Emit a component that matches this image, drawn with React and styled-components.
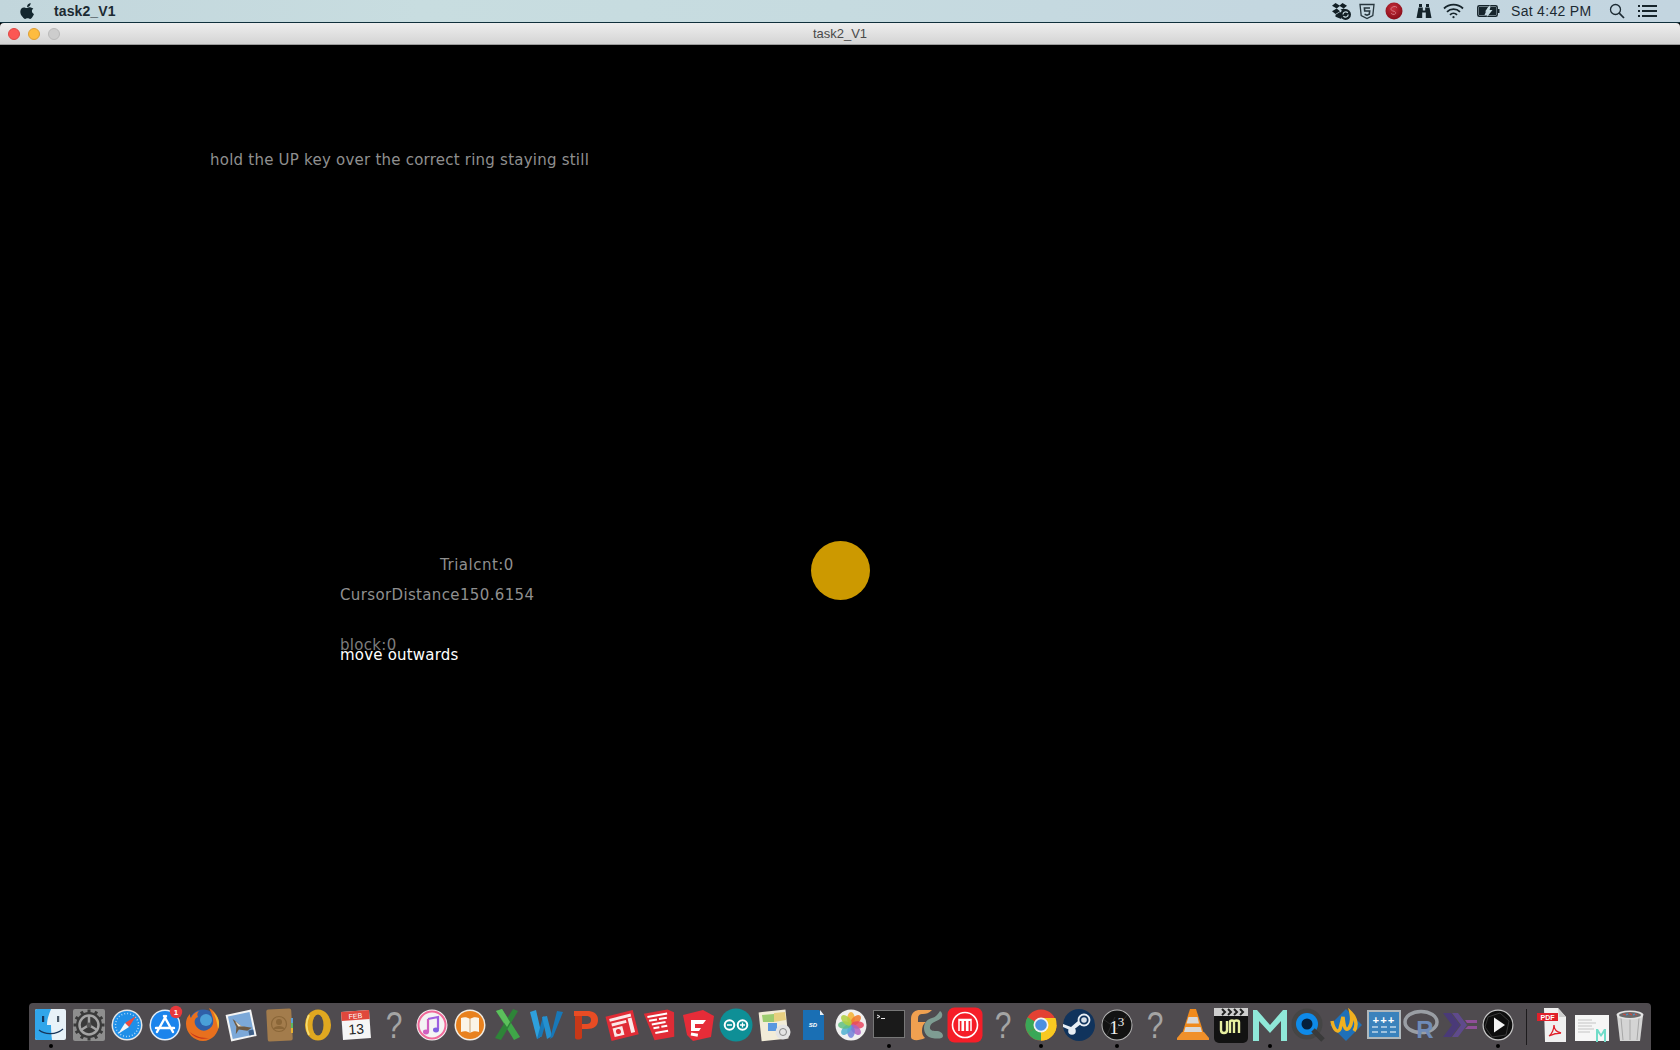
import React from "react";
import styled, { createGlobalStyle } from "styled-components";

const GlobalStyle = createGlobalStyle`
  html, body {
    margin: 0;
    padding: 0;
    background: #000;
  }
  #root {
    width: 1680px;
    height: 1050px;
    overflow: hidden;
  }
`;

const Screen = styled.div`
  width: 1680px;
  height: 1050px;
  display: flex;
  flex-direction: column;
  overflow: hidden;
  background: #000;
`;

const MenuBar = styled.div`
  height: 22px;
  flex: none;
  display: flex;
  align-items: center;
  justify-content: space-between;
  padding: 0 23px 0 20px;
  background: linear-gradient(90deg, #c2d6dc 0%, #c8dde0 25%, #c6dbe0 50%, #c4d7e0 75%, #c3d5e0 100%);
  border-bottom: 1px solid #10303c;
  font-family: "Liberation Sans", Arial, sans-serif;
  color: #1c2a32;
`;

const MenuLeft = styled.div`
  display: flex;
  align-items: center;
`;

const MenuRight = styled.div`
  display: flex;
  align-items: center;
`;

const AppName = styled.div`
  font-size: 14px;
  font-weight: bold;
  letter-spacing: 0.1px;
  margin-left: 19px;
`;

const StatusItem = styled.div`
  display: flex;
  align-items: center;
  margin-left: ${(p) => p.$ml}px;
`;

const Clock = styled.div`
  font-size: 14px;
  letter-spacing: 0.3px;
  margin-left: 11px;
  width: 80px;
  white-space: nowrap;
`;

const TitleBar = styled.div`
  height: 21px;
  flex: none;
  position: relative;
  display: flex;
  align-items: center;
  justify-content: center;
  background: linear-gradient(#eeeeee, #d4d4d4);
  border-bottom: 1px solid #9c9c9c;
  border-radius: 4px 4px 0 0;
`;

const Lights = styled.div`
  position: absolute;
  left: 8px;
  top: 5px;
  display: flex;
  gap: 8px;
`;

const Light = styled.div`
  width: 12px;
  height: 12px;
  box-sizing: border-box;
  border-radius: 50%;
  background: ${(p) => p.$color};
  border: 1px solid ${(p) => p.$edge};
`;

const WindowTitle = styled.div`
  font-family: "Liberation Sans", Arial, sans-serif;
  font-size: 13px;
  color: #4a4a4a;
`;

const Stage = styled.div`
  flex: 1;
  position: relative;
  display: flex;
  flex-direction: column;
  justify-content: flex-end;
  background: #000;
`;

const Label = styled.div`
  position: absolute;
  left: ${(p) => p.$x}px;
  top: ${(p) => p.$y}px;
  font-family: "DejaVu Sans", sans-serif;
  font-size: 15px;
  letter-spacing: ${(p) => p.$track}px;
  line-height: 20px;
  white-space: nowrap;
  color: ${(p) => p.$color || "#8f8f8f"};
`;

const Cursor = styled.div`
  position: absolute;
  left: 811px;
  top: 496px;
  width: 59px;
  height: 59px;
  border-radius: 50%;
  background: #cc9900;
`;

const Dock = styled.div`
  height: 47px;
  margin: 0 29px;
  padding-left: 3px;
  display: flex;
  background: #4f4b4f;
  border-radius: 4px 4px 0 0;
`;

const Slot = styled.div`
  position: relative;
  width: 38.08px;
  flex: none;
  display: flex;
  justify-content: center;
  padding-top: 4px;
  box-sizing: border-box;
  &::after {
    content: "";
    display: ${(p) => (p.$running ? "block" : "none")};
    position: absolute;
    left: 50%;
    bottom: 2px;
    width: 4px;
    height: 4px;
    margin-left: -2px;
    border-radius: 50%;
    background: #000;
  }
`;

const Divider = styled.div`
  width: 1px;
  height: 36px;
  flex: none;
  margin: 6px 8px 0 9px;
  background: #1d1b1d;
`;

const Glyph = styled.svg`
  width: 36px;
  height: 36px;
  display: block;
  flex: none;
  overflow: visible;
`;

const AppleLogo = () => (
  <svg width="15" height="16" viewBox="0 0 15 16">
    <path fill="#13262e" d="M10.6 0c.1 1.2-.4 2.2-1 2.9-.7.8-1.6 1.2-2.5 1.1C7 2.9 7.5 1.9 8.1 1.3 8.8.6 9.8.1 10.6 0zM13.4 5.4c-.9.6-1.5 1.5-1.5 2.7 0 1.4.8 2.4 2.1 3-.4 1.1-.9 2.1-1.6 3-.6.9-1.3 1.8-2.3 1.8-1 0-1.3-.6-2.5-.6-1.2 0-1.5.6-2.500.6-1 0-1.7-1-2.4-1.9C1 12.4.3 10.500.3 8.7c0-2.8 1.8-4.3 3.6-4.3 1 0 1.900.7 2.500.7.6 0 1.600-.8 2.800-.8 1.100 0 2.200.5 4.200 1.100z" />
  </svg>
);

// five dropbox diamonds with the sync badge on top
const Dropbox = () => (
  <svg width="20" height="17" viewBox="0 0 20 17" fill="#131f25">
    <path d="M4.5 0l4.5 2.8-3.300 2.700L1 2.800zM11.500 0L16 2.800 12.700 5.500 8.300 2.800z" />
    <path d="M1 8.200l4.700-2.700 3.300 2.700-4.500 2.800zM4.500 11.800l4.500-2.700 2 1.500-.8 5.400-5.700-2.300z" />
    <path d="M9.500 6.500l3.200-1 3 1.500-3.500 2z" />
    <circle cx="14.600" cy="11.500" r="5.400" />
    <path d="M12 11.500a2.700 2.700 0 0 1 4.800-1.600M17.200 11.500a2.700 2.700 0 0 1-4.800 1.600" stroke="#c6dbe0" strokeWidth="1.200" fill="none" />
  </svg>
);

const ShieldFive = () => (
  <svg width="16" height="17" viewBox="0 0 16 17" fill="none" stroke="#27363d" strokeWidth="1.300">
    <path d="M1 1.500h14l-1.200 11L8 15.500l-5.800-3z" />
    <path d="M11 5H5.400l.3 3h5l-.4 3.300L8 12.200l-2.400-.9" strokeWidth="1.600" />
  </svg>
);

const RedBadge = () => (
  <svg width="18" height="18" viewBox="0 0 18 18">
    <defs>
      <radialGradient id="redBall" cx="45%" cy="35%" r="70%">
        <stop offset="0%" stopColor="#c8303c" />
        <stop offset="100%" stopColor="#820a16" />
      </radialGradient>
    </defs>
    <circle cx="9" cy="9" r="8.500" fill="url(#redBall)" />
    <path d="M12 5.500a3.800 3.800 0 0 0-5.800.8c-.8 1.600.7 2.500 2.800 3 2.200.5 2.200 2.800.2 3.100a3.500 3.500 0 0 1-3-1" fill="none" stroke="#d87a84" strokeWidth="1" />
  </svg>
);

const Binoculars = () => (
  <svg width="16" height="16" viewBox="0 0 16 16" fill="#14232a">
    <path d="M3 1h3v3H3zM10 1h3v3h-3z" />
    <path d="M2.500 4.500h4.300v3h2.400v-3h4.300L15.500 15h-5.700V9.500H6.200V15H.5z" />
  </svg>
);

const Wifi = () => (
  <svg width="21" height="16" viewBox="0 0 21 16" fill="none" stroke="#16242b" strokeWidth="1.800">
    <path d="M1 5.500a13.500 13.500 0 0 1 19 0" />
    <path d="M4 8.800a9.300 9.300 0 0 1 13 0" />
    <path d="M7 11.800a5 5 0 0 1 7 0" />
    <circle cx="10.500" cy="14.200" r="1.100" fill="#16242b" stroke="none" />
  </svg>
);

const Battery = () => (
  <svg width="23" height="14" viewBox="0 0 23 14">
    <rect x="0.800" y="1.800" width="19.400" height="10.400" rx="1.500" fill="none" stroke="#16242b" strokeWidth="1.500" />
    <rect x="21" y="5" width="1.500" height="4" fill="#16242b" />
    <path d="M2 3h9l-3.500 8H2z" fill="#16242b" />
    <path d="M13.500 3h5.500v8h-8z" fill="#16242b" />
    <path d="M13.500 .5L8 7.500h3.500L9.500 13.500l6-7.500H12z" fill="#c6dbe0" />
  </svg>
);

const SearchGlass = () => (
  <svg width="16" height="16" viewBox="0 0 16 16" fill="none" stroke="#1c2a32" strokeWidth="1.300">
    <circle cx="6.500" cy="6.500" r="5" />
    <path d="M10.200 10.200L15 15" strokeWidth="1.700" />
  </svg>
);

const ListLines = () => (
  <svg width="19" height="12" viewBox="0 0 19 12" fill="#16242b">
    <path d="M0 0h2v2H0zM0 5h2v2H0zM0 10h2v2H0zM4 0h15v2H4zM4 5h15v2H4zM4 10h15v2H4z" />
  </svg>
);

const gearTeeth = [0, 30, 60, 90, 120, 150, 180, 210, 240, 270, 300, 330];

const petals = [
  ["#f4b030", 0],
  ["#f07828", 45],
  ["#e84860", 90],
  ["#b060c0", 135],
  ["#7080d8", 180],
  ["#50b0d0", 225],
  ["#60c080", 270],
  ["#b0d040", 315],
];

const icons = {
  finder: (
    <>
      <rect x="2" y="2" width="31" height="31" rx="2" fill="#e8f2f8" />
      <path d="M2 4a2 2 0 0 1 2-2h14c-2 5-4 10-4 16h4c0 5 .5 11 1 15H4a2 2 0 0 1-2-2z" fill="#31a6ea" />
      <rect x="9" y="9" width="2.200" height="6" fill="#16355a" />
      <rect x="24" y="9" width="2.200" height="6" fill="#4a5a68" />
      <path d="M6 23c6 5 17 5 24-1" stroke="#16355a" strokeWidth="1.200" fill="none" />
    </>
  ),
  prefs: (
    <>
      <rect x="2" y="2" width="32" height="32" rx="2" fill="#8e8e8e" />
      <circle cx="18" cy="18" r="13" fill="#3a3a3a" />
      {gearTeeth.map((a) => (
        <rect key={a} x="16.500" y="2.500" width="3" height="3.500" fill="#3a3a3a" transform={`rotate(${a} 18 18)`} />
      ))}
      <circle cx="18" cy="18" r="9.500" fill="none" stroke="#a4a4a4" strokeWidth="2.500" />
      <path d="M18 18V9M18 18l-8 5M18 18l8 5" stroke="#a4a4a4" strokeWidth="2.500" />
      <circle cx="18" cy="18" r="2.500" fill="#555" />
    </>
  ),
  safari: (
    <>
      <circle cx="18" cy="18" r="15.500" fill="#e6e6e6" />
      <circle cx="18" cy="18" r="14" fill="#1f8fe8" />
      <circle cx="18" cy="18" r="11.500" fill="none" stroke="#a9d4f6" strokeWidth="1.500" strokeDasharray="1 2" />
      <path d="M27 9L16 16l4 4z" fill="#f04a3c" />
      <path d="M9 27l11-7-4-4z" fill="#f4f4f4" />
    </>
  ),
  appstore: (
    <>
      <circle cx="18" cy="18" r="15.500" fill="#e4eef8" />
      <circle cx="18" cy="18" r="14" fill="#1b84ec" />
      <path d="M19 9l-9 16M17 9l9 16M9 21h18" stroke="#fff" strokeWidth="2.400" strokeLinecap="round" />
      <circle cx="29" cy="5" r="6.200" fill="#e8383c" />
      <text x="29" y="8" textAnchor="middle" fontSize="8" fontWeight="bold" fill="#fff" fontFamily="Liberation Sans">1</text>
    </>
  ),
  firefox: (
    <>
      <circle cx="18" cy="17" r="14.500" fill="#2f5fa8" />
      <circle cx="21" cy="13" r="6" fill="#4aa0d8" />
      <path d="M24 1c6 3 10 9 10 16 0 9-7 17-16 17S1 26 1 17c0-4 1-7 4-10 0 2 0 3 1 4 1-3 4-6 8-7-2 2-2 4-1 6-3 1-4 4-3 7 2 5 7 8 12 6 5-2 7-6 6-11-.5-3-2-7-4-11z" fill="#e8701e" />
      <path d="M27 4c4 3 7 8 7 12 0 2 0 4-1 6-1-6-2-13-6-18z" fill="#f4b832" />
      <path d="M5 25c4 6 12 8 19 6-7 0-13-1-19-6z" fill="#c8341a" />
    </>
  ),
  mail: (
    <g transform="rotate(-12 18 18)">
      <rect x="5" y="5" width="26" height="27" fill="#f4f4f4" />
      <rect x="7" y="7" width="22" height="23" fill="#7ca8d8" />
      <path d="M11 10l7 9 10 4-5 2-8-3-4 4 2-7z" fill="#6e5a44" />
      <path d="M13 13l5 6 3 1-6-1z" fill="#e8e0d0" />
      <rect x="24" y="25" width="5" height="5" fill="#3f5f88" />
    </g>
  ),
  contacts: (
    <>
      <rect x="5" y="2" width="25" height="32" rx="2" fill="#a37c4c" transform="rotate(-3 18 18)" />
      <rect x="29" y="11" width="2" height="5" fill="#5aa0d8" />
      <rect x="29" y="16" width="2" height="5" fill="#5cb860" />
      <rect x="29" y="21" width="2" height="5" fill="#e8b030" />
      <circle cx="17" cy="17" r="7.500" fill="none" stroke="#8a6638" strokeWidth="1.200" />
      <circle cx="17" cy="15" r="3" fill="#8a6638" />
      <path d="M11 22c2-4 10-4 12 0z" fill="#8a6638" />
    </>
  ),
  outlook: (
    <>
      <ellipse cx="18" cy="18" rx="13" ry="15.500" fill="#e0a820" />
      <ellipse cx="18" cy="18" rx="5.500" ry="10.500" fill="#4f4b4f" />
      <path d="M9 8c-3 6-3 14 0 20" stroke="#f8dc70" strokeWidth="2" fill="none" />
    </>
  ),
  calendar: (
    <g transform="rotate(-4 18 18)">
      <rect x="4" y="4" width="28" height="28" fill="#f6f6f6" />
      <rect x="4" y="4" width="28" height="9" fill="#e0483c" />
      <text x="18" y="11.500" textAnchor="middle" fontSize="7" fill="#fff" fontFamily="Liberation Sans">FEB</text>
      <text x="18" y="27" textAnchor="middle" fontSize="14" fill="#222" fontFamily="Liberation Sans">13</text>
    </g>
  ),
  unknown: (
    <text transform="translate(18 31) scale(1 1.25)" textAnchor="middle" fontSize="30" fill="#a4a4a4" fontFamily="Liberation Sans">?</text>
  ),
  itunes: (
    <>
      <circle cx="18" cy="18" r="15.500" fill="#f4f4f4" />
      <circle cx="18" cy="18" r="13.500" fill="none" stroke="#f06a9a" strokeWidth="2" />
      <path d="M14 12l10-2v12" stroke="#a060e0" strokeWidth="2.200" fill="none" />
      <path d="M14 12v13" stroke="#d060c0" strokeWidth="2.200" />
      <ellipse cx="12" cy="25" rx="3" ry="2.400" fill="#d060c0" />
      <ellipse cx="22" cy="23" rx="3" ry="2.400" fill="#8060e0" />
    </>
  ),
  ibooks: (
    <>
      <circle cx="18" cy="18" r="15.500" fill="#f0ece4" />
      <circle cx="18" cy="18" r="14" fill="#e8811e" />
      <path d="M18 12c-3-2-6-2-9-1v14c3-1 6-1 9 1 3-2 6-2 9-1V11c-3-1-6-1-9 1z" fill="#faf4e8" />
      <path d="M18 12v14" stroke="#c8a070" strokeWidth="1" />
    </>
  ),
  excel: (
    <>
      <path d="M6 4l6-2 18 28-6 3z" fill="#3fa648" />
      <path d="M28 4l-5-2L5 31l6 2z" fill="#2e8438" />
      <path d="M6 4l6-2 8 13-3 5z" fill="#5cc05c" />
    </>
  ),
  word: (
    <>
      <path d="M2 5l6-2 6 26-5 3z" fill="#2ea0dc" />
      <path d="M19 11l-5 18-5 3 6-23z" fill="#1878b8" />
      <path d="M14 10l5-1 5 20-5 3z" fill="#2490d0" />
      <path d="M29 4l6 1-10 25-3 2z" fill="#1878b8" />
    </>
  ),
  powerpoint: (
    <>
      <path d="M8 4h13c7 0 11 3 11 9s-4 9-11 9h-5v-5h4c3 0 5-1 5-4s-2-4-5-4H8z" fill="#e84c24" />
      <path d="M9 9h7v22c-2 2-6 2-7 0z" fill="#c83818" />
    </>
  ),
  sheetA: (
    <g transform="rotate(-14 18 18)">
      <rect x="4" y="6" width="28" height="25" fill="#e02c36" />
      <path d="M7 9h22v3H7zM25 13h4v15h-4zM8 14h15v3H8z" fill="#fbe8e8" />
      <rect x="8" y="19" width="10" height="9" fill="#fbe8e8" />
      <circle cx="13" cy="23.500" r="2.500" fill="#e02c36" />
    </g>
  ),
  sheetB: (
    <g transform="rotate(-10 18 18)">
      <path d="M4 4h24l6 4-4 24H10z" fill="#e02c36" />
      <path d="M7 7h20v2H7zM8 11h8v2H8zM18 11h8v2h-8zM10 15h14v2H10zM11 19h6v2h-6zM19 19h6v2h-6zM12 24h13v2H12z" fill="#fff" />
    </g>
  ),
  sketchup: (
    <>
      <path d="M3 8L23 3l11 6-3 21-18 4-6-6z" fill="#e62c38" />
      <path d="M11 13h15l-3 4h-8v4h6l-2 3h-8z" fill="#fff" />
      <rect x="11" y="26" width="7" height="3" fill="#fff" transform="rotate(10 14 27)" />
    </>
  ),
  arduino: (
    <>
      <circle cx="18" cy="18" r="16.500" fill="#0e8f96" />
      <circle cx="11.500" cy="18" r="4.800" fill="none" stroke="#fff" strokeWidth="2" />
      <circle cx="24.500" cy="18" r="4.800" fill="none" stroke="#fff" strokeWidth="2" />
      <path d="M9 18h5M22 18h5M24.500 15.500v5" stroke="#fff" strokeWidth="1.300" />
    </>
  ),
  maps: (
    <g>
      <rect x="3" y="4" width="27" height="29" fill="#f2ecd8" transform="rotate(-6 16 18)" />
      <path d="M5 8l12-1v8H6z" fill="#9ccc70" />
      <path d="M17 6l11-1 1 8-12 2z" fill="#e8d080" />
      <rect x="11" y="16" width="9" height="8" fill="#5a98e0" />
      <circle cx="26" cy="25" r="7.500" fill="#e4e4e4" />
      <circle cx="26" cy="25" r="3.500" fill="none" stroke="#888" />
    </g>
  ),
  sdcard: (
    <>
      <path d="M8 3h16l5 5v25H8z" fill="#1a6fb4" />
      <path d="M25 3l4 5h-4z" fill="#e8eef4" />
      <text x="18" y="20" textAnchor="middle" fontSize="6" fontWeight="bold" fontStyle="italic" fill="#fff" fontFamily="Liberation Sans">SD</text>
    </>
  ),
  photos: (
    <>
      <circle cx="18" cy="18" r="15.500" fill="#f0f0f0" />
      {petals.map(([c, a]) => (
        <ellipse key={a} cx="18" cy="11.500" rx="3.800" ry="6.500" fill={c} opacity="0.850" transform={`rotate(${a} 18 18)`} />
      ))}
    </>
  ),
  terminal: (
    <>
      <rect x="2" y="3" width="32" height="28" fill="#777" />
      <rect x="3" y="4" width="30" height="26" fill="#1a1a1a" />
      <path d="M6 8l3 1.500L6 11M10 11.500h4" stroke="#eee" strokeWidth="1" fill="none" />
    </>
  ),
  pycharm: (
    <>
      <path d="M2 30V12C2 6 6 3 11 3h12c-3 3-6 4-9 4-4 0-5 2-5 5v3h8c-3 2-4 5-4 9 0 3 1 5 3 7-6 3-14 3-14-1z" fill="#f0a050" />
      <path d="M15 21c0-6 4-9 8-10 4-1 6-4 8-7 3 2 3 6 0 8-4 3-9 3-10 8-.5 3 2 4 6 4 4 0 7 2 7 5 0 3-6 3-11 2-5-1-8-5-8-10z" fill="#7e9c92" />
    </>
  ),
  makerbot: (
    <>
      <rect x="0.500" y="0.500" width="35" height="35" rx="7" fill="#f51e28" />
      <circle cx="18" cy="18" r="12.500" fill="none" stroke="#fff" strokeWidth="1.600" />
      <path d="M12 24V12.500h3.200V24M16.400 24V12.500h3.200V24M20.800 24V12.500h3.200V24" fill="none" stroke="#fff" strokeWidth="1.500" />
      <path d="M12 13h12" stroke="#fff" strokeWidth="2" />
    </>
  ),
  chrome: (
    <>
      <circle cx="18" cy="18" r="15.500" fill="#e34133" />
      <path d="M18 18L4.600 25.800A15.500 15.500 0 0 0 18 33.500z" fill="#3aa757" />
      <path d="M4.600 25.800A15.500 15.500 0 0 1 4.600 10.200L18 18z" fill="#3aa757" />
      <path d="M18 33.500A15.500 15.500 0 0 0 33.500 18H18z" fill="#f8c921" />
      <path d="M18 11h14.500a15.500 15.500 0 0 1 1 7 15.500 15.500 0 0 1-15.500 15.500L24 22z" fill="#f8c921" />
      <circle cx="18" cy="18" r="7.500" fill="#f2f2f2" />
      <circle cx="18" cy="18" r="5.800" fill="#4a8fe0" />
    </>
  ),
  steam: (
    <>
      <circle cx="18" cy="18" r="16" fill="#10335c" />
      <circle cx="23" cy="13" r="5.500" fill="none" stroke="#e8eef4" strokeWidth="1.800" />
      <circle cx="23" cy="13" r="2.800" fill="#d8e0e8" />
      <path d="M2 20l9 4 9-7-3-3-7 6-8-3z" fill="#e8eef4" />
      <circle cx="11" cy="24" r="3.800" fill="#e8eef4" />
    </>
  ),
  thirteen: (
    <>
      <circle cx="18" cy="18" r="15.500" fill="#b8b8b8" />
      <circle cx="18" cy="18" r="14.500" fill="#121212" />
      <path d="M4 12l14 10 10-14M8 28l8-18" stroke="#444" strokeWidth="0.500" fill="none" />
      <text x="15" y="27" textAnchor="middle" fontSize="19" fill="#f0f0f0" fontFamily="Liberation Serif">1</text>
      <text x="22" y="19" textAnchor="middle" fontSize="13" fill="#f0f0f0" fontFamily="Liberation Serif">3</text>
    </>
  ),
  vlc: (
    <>
      <path d="M15 2h6l8 25H7z" fill="#f08a1c" />
      <path d="M13.500 10h9l1.500 6.500H11.500z" fill="#d8d8d8" />
      <path d="M10.500 20h15l1.500 5H9z" fill="#d8d8d8" />
      <path d="M7 25l-5 6v2h32v-2l-5-6z" fill="#f0902a" />
    </>
  ),
  umovie: (
    <>
      <rect x="1" y="1" width="34" height="35" rx="5" fill="#121212" />
      <rect x="1" y="1" width="34" height="8" fill="#cfcfcf" />
      <path d="M9 2l3 3-3 3M15 2l3 3-3 3M21 2l3 3-3 3M27 2l3 3-3 3" stroke="#222" strokeWidth="2" fill="none" />
      <path d="M8 14v9c0 4 6 4 6 0v-9M17 26V15c0-2 4-2 4 0v11M21 15c0-2 5-2 5 0v11" stroke="#e8f0a0" strokeWidth="2.400" fill="none" />
    </>
  ),
  mTeal: (
    <path d="M1 34V3h4l13 15L31 3h4v31h-6V14l-11 12L7 14v20z" fill="#8fe8d8" />
  ),
  quicktime: (
    <>
      <circle cx="17" cy="17" r="15.500" fill="#454545" />
      <circle cx="17" cy="17" r="11" fill="#0e8ae8" />
      <circle cx="17" cy="17" r="5.500" fill="#05203c" />
      <path d="M23 23l10 10" stroke="#3a3a3a" strokeWidth="5" />
    </>
  ),
  wings: (
    <>
      <path d="M18 2l16 16-16 16L2 18z" fill="#1f70b8" />
      <path d="M4 14c2 10 6 12 8 8l3-12c1 12 3 14 6 11 3-4 3-10 2-15 6 6 6 14 3 18" stroke="#f0b020" strokeWidth="3.500" fill="none" />
    </>
  ),
  plusminus: (
    <>
      <rect x="1" y="3" width="34" height="29" fill="#b0b8bc" />
      <rect x="3" y="5" width="30" height="25" fill="#3a82bc" />
      <text x="18" y="17" textAnchor="middle" fontSize="11" fontWeight="bold" fill="#fff" fontFamily="Liberation Mono" letterSpacing="1">+++</text>
      <path d="M6 20h6M15 20h6M24 20h6M6 25h6M15 25h6M24 25h6" stroke="#fff" strokeWidth="1.200" />
    </>
  ),
  rlang: (
    <>
      <ellipse cx="17" cy="15" rx="16" ry="10.500" fill="none" stroke="#9a9ea4" strokeWidth="3.500" />
      <text x="21" y="31" textAnchor="middle" fontSize="24" fontWeight="bold" fill="#6f8bb8" fontFamily="Liberation Sans">R</text>
    </>
  ),
  vstudio: (
    <>
      <path d="M1 6h8l9 12-9 12H1l9-12z" fill="#4a3a78" />
      <path d="M10 6h6l9 12-9 12h-6l9-12z" fill="#5f4a8c" />
      <path d="M23 13h12v3H25zM26 19h9v3H23z" fill="#8f4f98" />
    </>
  ),
  player: (
    <>
      <circle cx="18" cy="18" r="15.500" fill="#c8c8c8" />
      <circle cx="18" cy="18" r="14.300" fill="#0e0e0e" />
      <path d="M8 10l12-4 9 8-3 14-14 2-7-10z" fill="none" stroke="#4a4a4a" strokeWidth="0.700" />
      <path d="M14 10.500l11 7.500-11 7.500z" fill="#f4f4f4" />
    </>
  ),
  pdf: (
    <>
      <path d="M8 1h14l8 9v25H9z" fill="#f0f0f0" />
      <path d="M22 1l8 9h-7z" fill="#cfcfcf" />
      <rect x="1" y="6" width="21" height="8" fill="#e0202a" />
      <text x="11.500" y="12.800" textAnchor="middle" fontSize="7" fontWeight="bold" fill="#fff" fontFamily="Liberation Sans">PDF</text>
      <path d="M13 29c3-2 5-7 5-11 0 4 3 7 7 8-4 0-8 1-12 3z" fill="none" stroke="#e0202a" strokeWidth="1.300" />
    </>
  ),
  doc: (
    <>
      <rect x="1" y="8" width="34" height="26" fill="#f6f6f6" />
      <path d="M4 13h14M4 16h18M4 19h14M4 22h16M4 25h12" stroke="#c4c4c4" strokeWidth="1" />
      <path d="M22 35V22h2l3 5 3-5h2v13h-2v-9l-3 4-3-4v9z" fill="#70dcc8" />
    </>
  ),
  trash: (
    <>
      <path d="M5 9h26l-3 25H8z" fill="#d4d4d4" />
      <path d="M9 11l2 22M18 11v22M27 11l-2 22" stroke="#a8a8a8" strokeWidth="1" />
      <ellipse cx="18" cy="8" rx="13.500" ry="4.500" fill="#e4e4e4" />
      <ellipse cx="18" cy="8" rx="11" ry="3" fill="#6a6a6a" />
      <path d="M11 7l3 1M17 6l3 2M23 7l2 1" stroke="#d0483c" strokeWidth="1.200" />
      <path d="M14 8l2-1M21 8l2-1" stroke="#4a90d0" strokeWidth="1.200" />
    </>
  ),
};

const apps = [
  { icon: "finder", running: true },
  { icon: "prefs" },
  { icon: "safari" },
  { icon: "appstore" },
  { icon: "firefox" },
  { icon: "mail" },
  { icon: "contacts" },
  { icon: "outlook" },
  { icon: "calendar" },
  { icon: "unknown" },
  { icon: "itunes" },
  { icon: "ibooks" },
  { icon: "excel" },
  { icon: "word" },
  { icon: "powerpoint" },
  { icon: "sheetA" },
  { icon: "sheetB" },
  { icon: "sketchup" },
  { icon: "arduino" },
  { icon: "maps" },
  { icon: "sdcard" },
  { icon: "photos" },
  { icon: "terminal", running: true },
  { icon: "pycharm" },
  { icon: "makerbot" },
  { icon: "unknown" },
  { icon: "chrome", running: true },
  { icon: "steam" },
  { icon: "thirteen", running: true },
  { icon: "unknown" },
  { icon: "vlc" },
  { icon: "umovie" },
  { icon: "mTeal", running: true },
  { icon: "quicktime" },
  { icon: "wings" },
  { icon: "plusminus" },
  { icon: "rlang" },
  { icon: "vstudio" },
  { icon: "player", running: true },
];

const docs = ["pdf", "doc", "trash"];

const DockIcon = ({ name, running }) => (
  <Slot $running={running}>
    <Glyph viewBox="0 0 36 36">{icons[name]}</Glyph>
  </Slot>
);

export default function App() {
  return (
    <Screen>
      <GlobalStyle />
      <MenuBar>
        <MenuLeft>
          <AppleLogo />
          <AppName>task2_V1</AppName>
        </MenuLeft>
        <MenuRight>
          <StatusItem $ml={0}><Dropbox /></StatusItem>
          <StatusItem $ml={8}><ShieldFive /></StatusItem>
          <StatusItem $ml={10}><RedBadge /></StatusItem>
          <StatusItem $ml={13}><Binoculars /></StatusItem>
          <StatusItem $ml={11}><Wifi /></StatusItem>
          <StatusItem $ml={13}><Battery /></StatusItem>
          <Clock>Sat 4:42 PM</Clock>
          <StatusItem $ml={18}><SearchGlass /></StatusItem>
          <StatusItem $ml={13}><ListLines /></StatusItem>
        </MenuRight>
      </MenuBar>
      <TitleBar>
        <Lights>
          <Light $color="#fc5753" $edge="#df4744" />
          <Light $color="#fdbc40" $edge="#de9f34" />
          <Light $color="#cdcdcd" $edge="#bababa" />
        </Lights>
        <WindowTitle>task2_V1</WindowTitle>
      </TitleBar>
      <Stage>
        <Label $x={210} $y={105} $track={0.23}>hold the UP key over the correct ring staying still</Label>
        <Label $x={440} $y={510} $track={0.5}>Trialcnt:0</Label>
        <Label $x={340} $y={540} $track={0.36}>CursorDistance150.6154</Label>
        <Label $x={340} $y={590} $track={0.3} $color="#7c7c7c">block:0</Label>
        <Label $x={340} $y={600} $track={0.2} $color="#ffffff">move outwards</Label>
        <Cursor />
        <Dock>
          {apps.map((app, i) => (
            <DockIcon key={i} name={app.icon} running={app.running} />
          ))}
          <Divider />
          {docs.map((name) => (
            <DockIcon key={name} name={name} />
          ))}
        </Dock>
      </Stage>
    </Screen>
  );
}
